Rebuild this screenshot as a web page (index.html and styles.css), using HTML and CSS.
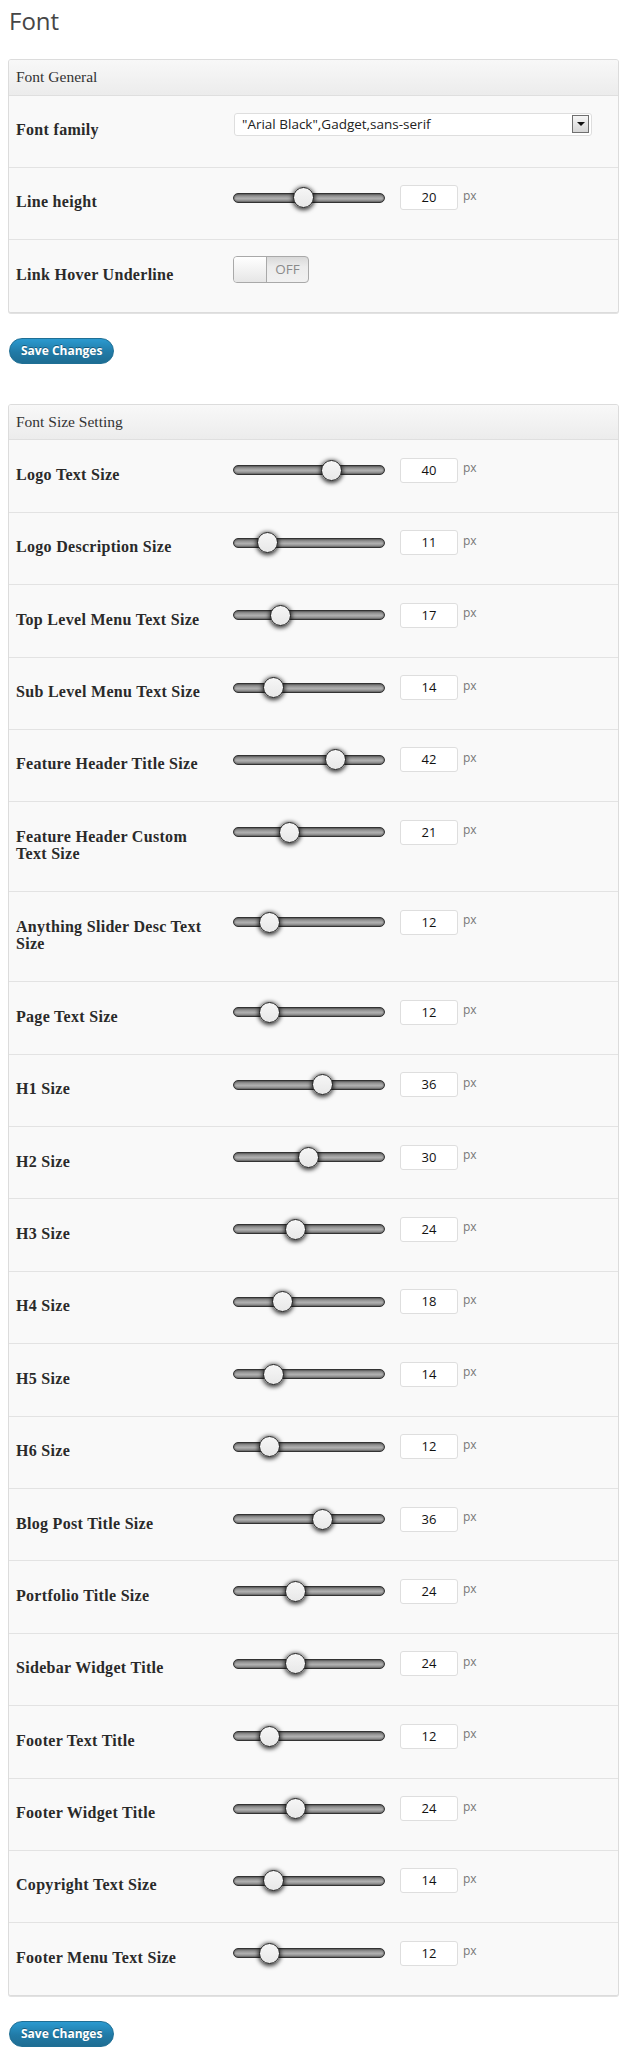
FILE: index.html
```html
<!DOCTYPE html>
<html lang="en">
<head>
<meta charset="utf-8">
<title>Font</title>
<link rel="stylesheet" href="styles.css">
</head>
<body>
<h2 class="page-title">Font</h2>

<section class="panel">
  <div class="panel-head">Font General</div>
  <div class="row">
    <div class="label">Font family</div>
    <div class="control">
      <div class="select"><span class="select-text">"Arial Black",Gadget,sans-serif</span><span class="select-arrow"><span class="tri"></span></span></div>
    </div>
  </div>
  <div class="row">
    <div class="label">Line height</div>
    <div class="control"><div class="slider"><div class="track"><span class="thumb" style="left:58.5px"></span></div><span class="num">20</span><span class="unit">px</span></div></div>
  </div>
  <div class="row">
    <div class="label">Link Hover Underline</div>
    <div class="control"><div class="toggle"><span class="knob"></span><span class="state">OFF</span></div></div>
  </div>
</section>

<button class="save" type="button">Save Changes</button>

<section class="panel panel-sizes">
  <div class="panel-head">Font Size Setting</div>
  <div class="row"><div class="label">Logo Text Size</div><div class="control"><div class="slider"><div class="track"><span class="thumb" style="left:86.5px"></span></div><span class="num">40</span><span class="unit">px</span></div></div></div>
  <div class="row"><div class="label">Logo Description Size</div><div class="control"><div class="slider"><div class="track"><span class="thumb" style="left:22.5px"></span></div><span class="num">11</span><span class="unit">px</span></div></div></div>
  <div class="row"><div class="label">Top Level Menu Text Size</div><div class="control"><div class="slider"><div class="track"><span class="thumb" style="left:35.7px"></span></div><span class="num">17</span><span class="unit">px</span></div></div></div>
  <div class="row"><div class="label">Sub Level Menu Text Size</div><div class="control"><div class="slider"><div class="track"><span class="thumb" style="left:29.1px"></span></div><span class="num">14</span><span class="unit">px</span></div></div></div>
  <div class="row"><div class="label">Feature Header Title Size</div><div class="control"><div class="slider"><div class="track"><span class="thumb" style="left:90.9px"></span></div><span class="num">42</span><span class="unit">px</span></div></div></div>
  <div class="row"><div class="label">Feature Header Custom Text Size</div><div class="control"><div class="slider"><div class="track"><span class="thumb" style="left:44.6px"></span></div><span class="num">21</span><span class="unit">px</span></div></div></div>
  <div class="row"><div class="label">Anything Slider Desc Text Size</div><div class="control"><div class="slider"><div class="track"><span class="thumb" style="left:24.7px"></span></div><span class="num">12</span><span class="unit">px</span></div></div></div>
  <div class="row"><div class="label">Page Text Size</div><div class="control"><div class="slider"><div class="track"><span class="thumb" style="left:24.7px"></span></div><span class="num">12</span><span class="unit">px</span></div></div></div>
  <div class="row"><div class="label">H1 Size</div><div class="control"><div class="slider"><div class="track"><span class="thumb" style="left:77.7px"></span></div><span class="num">36</span><span class="unit">px</span></div></div></div>
  <div class="row"><div class="label">H2 Size</div><div class="control"><div class="slider"><div class="track"><span class="thumb" style="left:64.4px"></span></div><span class="num">30</span><span class="unit">px</span></div></div></div>
  <div class="row"><div class="label">H3 Size</div><div class="control"><div class="slider"><div class="track"><span class="thumb" style="left:51.2px"></span></div><span class="num">24</span><span class="unit">px</span></div></div></div>
  <div class="row"><div class="label">H4 Size</div><div class="control"><div class="slider"><div class="track"><span class="thumb" style="left:37.9px"></span></div><span class="num">18</span><span class="unit">px</span></div></div></div>
  <div class="row"><div class="label">H5 Size</div><div class="control"><div class="slider"><div class="track"><span class="thumb" style="left:29.1px"></span></div><span class="num">14</span><span class="unit">px</span></div></div></div>
  <div class="row"><div class="label">H6 Size</div><div class="control"><div class="slider"><div class="track"><span class="thumb" style="left:24.7px"></span></div><span class="num">12</span><span class="unit">px</span></div></div></div>
  <div class="row"><div class="label">Blog Post Title Size</div><div class="control"><div class="slider"><div class="track"><span class="thumb" style="left:77.7px"></span></div><span class="num">36</span><span class="unit">px</span></div></div></div>
  <div class="row"><div class="label">Portfolio Title Size</div><div class="control"><div class="slider"><div class="track"><span class="thumb" style="left:51.2px"></span></div><span class="num">24</span><span class="unit">px</span></div></div></div>
  <div class="row"><div class="label">Sidebar Widget Title</div><div class="control"><div class="slider"><div class="track"><span class="thumb" style="left:51.2px"></span></div><span class="num">24</span><span class="unit">px</span></div></div></div>
  <div class="row"><div class="label">Footer Text Title</div><div class="control"><div class="slider"><div class="track"><span class="thumb" style="left:24.7px"></span></div><span class="num">12</span><span class="unit">px</span></div></div></div>
  <div class="row"><div class="label">Footer Widget Title</div><div class="control"><div class="slider"><div class="track"><span class="thumb" style="left:51.2px"></span></div><span class="num">24</span><span class="unit">px</span></div></div></div>
  <div class="row"><div class="label">Copyright Text Size</div><div class="control"><div class="slider"><div class="track"><span class="thumb" style="left:29.1px"></span></div><span class="num">14</span><span class="unit">px</span></div></div></div>
  <div class="row"><div class="label">Footer Menu Text Size</div><div class="control"><div class="slider"><div class="track"><span class="thumb" style="left:24.7px"></span></div><span class="num">12</span><span class="unit">px</span></div></div></div>
</section>

<button class="save" type="button">Save Changes</button>
</body>
</html>
```

FILE: styles.css
```css
* { box-sizing: border-box; }

html, body {
  margin: 0;
  padding: 0;
  background: #ffffff;
}

body {
  font-family: "Open Sans", "Liberation Sans", sans-serif;
  color: #333;
  padding-bottom: 12px;
}

.page-title {
  margin: 0;
  padding: 6px 0 0 9px;
  font-family: "Open Sans", "Liberation Sans", sans-serif;
  font-weight: 400;
  font-size: 24px;
  line-height: 29px;
  color: #464646;
}

.panel {
  margin: 24px 0 0 8px;
  width: 611px;
  border: 1px solid #dcdcdc;
  border-radius: 3px;
  background: #f9f9f9;
  box-shadow: 0 1px 0 #e2e2e2;
  overflow: hidden;
}

.panel-sizes {
  margin-top: 40px;
}

.panel-head {
  padding: 8px 7px 9px;
  font-family: "Liberation Serif", "Times New Roman", serif;
  font-size: 15.5px;
  line-height: 17.6px;
  color: #333;
  background: linear-gradient(to bottom, #f8f8f8, #ececec);
  border-bottom: 1px solid #dfdfdf;
}

.row {
  display: flex;
  align-items: flex-start;
  border-bottom: 1px solid #e3e3e3;
  background: #f9f9f9;
}

.row:last-child {
  border-bottom: 0;
}

.label {
  flex: 0 0 224px;
  padding: 25.5px 24px 28.3px 7px;
  font-family: "Liberation Serif", "Times New Roman", serif;
  font-weight: 700;
  font-size: 16px;
  letter-spacing: 0.3px;
  line-height: 17.6px;
  color: #2a2a2a;
}

.control {
  flex: 1 1 auto;
  padding-top: 16px;
}

/* select */
.select {
  margin: 1px 0 0 1px;
  width: 358px;
  height: 23px;
  border: 1px solid #dedede;
  border-radius: 3px;
  background: #fff;
  display: flex;
  align-items: center;
  justify-content: space-between;
  padding: 0 2px 0 7px;
}

.select-text {
  font-family: "Open Sans", "Liberation Sans", sans-serif;
  font-size: 13.5px;
  color: #222;
  white-space: nowrap;
}

.select-arrow {
  width: 17px;
  height: 18px;
  border: 1px solid #6f6f6f;
  background: linear-gradient(to bottom, #f6f6f6, #d6d6d6);
  display: flex;
  align-items: center;
  justify-content: center;
}

.tri {
  width: 0;
  height: 0;
  border-left: 4px solid transparent;
  border-right: 4px solid transparent;
  border-top: 4px solid #111;
}

/* slider */
.slider {
  display: flex;
  align-items: center;
  height: 28px;
}

.track {
  position: relative;
  width: 152px;
  height: 10px;
  border: 1px solid #333;
  border-radius: 5px;
  background: linear-gradient(to bottom, #777 0%, #a6a6a6 45%, #b0b0b0 55%, #858585 100%);
  box-shadow: inset 0 0 2px rgba(0, 0, 0, 0.7);
}

.thumb {
  position: absolute;
  top: -6.5px;
  width: 21px;
  height: 21px;
  border-radius: 50%;
  border: 1.5px solid #1a1a1a;
  background: linear-gradient(to bottom, #f6f6f6, #e8e8e8);
  box-shadow: 0 1px 4px 1px rgba(0, 0, 0, 0.75);
}

.num {
  margin-left: 15px;
  width: 58px;
  height: 25px;
  border: 1px solid #dedede;
  border-radius: 3px;
  background: #fff;
  text-align: center;
  font-family: "Open Sans", "Liberation Sans", sans-serif;
  font-size: 13px;
  line-height: 23px;
  color: #111;
}

.unit {
  margin-left: 5px;
  margin-bottom: 5px;
  font-family: "Open Sans", "Liberation Sans", sans-serif;
  font-size: 12px;
  color: #777;
}

/* toggle */
.toggle {
  display: flex;
  width: 76px;
  height: 27px;
  border: 1px solid #a9a9a9;
  border-radius: 4px;
  overflow: hidden;
  background: linear-gradient(to bottom, #d9d9d9, #ececec 40%, #f1f1f1);
}

.knob {
  flex: 0 0 33px;
  border-right: 1px solid #a9a9a9;
  background: linear-gradient(to bottom, #ffffff, #e6e6e6);
}

.state {
  flex: 1 1 auto;
  text-align: center;
  font-family: "Open Sans", "Liberation Sans", sans-serif;
  font-size: 13.5px;
  line-height: 25px;
  color: #8a8a8a;
}

/* button */
.save {
  display: block;
  margin: 25px 0 0 9px;
  height: 26px;
  padding: 0 11px;
  border: 1px solid #1f6f95;
  border-radius: 13px;
  background: linear-gradient(to bottom, #2b9ad0, #217aa6 55%, #1e6d93);
  color: #fff;
  font-family: "Open Sans", "Liberation Sans", sans-serif;
  font-weight: 700;
  font-size: 12px;
  line-height: 24px;
  text-shadow: 0 -1px 0 rgba(0, 0, 0, 0.35);
  cursor: pointer;
}
```
